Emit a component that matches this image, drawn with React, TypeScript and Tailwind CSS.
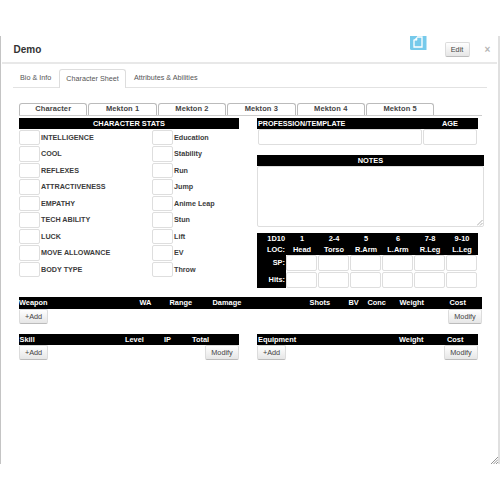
import React from "react";

const stats = [
  ["INTELLIGENCE", "Education"],
  ["COOL", "Stability"],
  ["REFLEXES", "Run"],
  ["ATTRACTIVENESS", "Jump"],
  ["EMPATHY", "Anime Leap"],
  ["TECH ABILITY", "Stun"],
  ["LUCK", "Lift"],
  ["MOVE ALLOWANCE", "EV"],
  ["BODY TYPE", "Throw"],
];

const locations = [
  ["1", "Head"],
  ["2-4", "Torso"],
  ["5", "R.Arm"],
  ["6", "L.Arm"],
  ["7-8", "R.Leg"],
  ["9-10", "L.Leg"],
];

const sheets = ["Character", "Mekton 1", "Mekton 2", "Mekton 3", "Mekton 4", "Mekton 5"];

function Field({ className = "" }: { className?: string }) {
  return <div className={`rounded-[2px] border border-[#dedede] bg-white ${className}`} />;
}

function Button({ children, className = "" }: { children: React.ReactNode; className?: string }) {
  return (
    <button
      className={`flex items-center justify-center rounded-[2px] border border-[#dcdcdc] border-b-[#bcbcbc] bg-linear-to-b from-white to-[#e6e6e6] text-[7.3px] leading-none text-[#444] ${className}`}
    >
      {children}
    </button>
  );
}

function Bar({ children, className = "" }: { children: React.ReactNode; className?: string }) {
  return (
    <div className={`flex h-[11px] items-center bg-black text-[7.4px] leading-none font-bold whitespace-nowrap text-white ${className}`}>
      {children}
    </div>
  );
}

export default function App() {
  return (
    <div className="h-[500px] w-[500px] overflow-hidden bg-white pt-9 font-['Liberation_Sans',Arial,sans-serif] text-[#333]">
      <div className="relative h-[428px] border-r-2 border-l border-r-[#e0e0e0] border-l-[#c4c4c4]">
        <header className="mr-px ml-px flex h-[28px] items-start border-b-2 border-[#e8e8e8] pl-[11.5px]">
          <h1 className="mt-[8px] w-[396px] text-[10px] leading-[12px] font-bold text-[#333]">Demo</h1>
          <svg className="h-[14px] w-[17px] shrink-0" viewBox="0 0 17 14">
            <path d="M0 0H16.5V14H1.5Q0 14 0 12.5Z" fill="#76caeb" />
            <path d="M4 3.5V11H12V1H7" fill="none" stroke="white" strokeWidth="1.3" />
            <path d="M4 4.2 7 1.2V4.2Z" fill="white" stroke="white" strokeWidth=".6" />
          </svg>
          <Button className="mt-[6px] ml-[18px] h-[15px] w-[25px] shrink-0">Edit</Button>
          <span className="mt-[8px] ml-[15px] text-[10px] leading-[12px] font-bold text-[#b5b5b5]">×</span>
        </header>

        <nav className="mr-[11px] ml-[12px] flex h-[24px] items-end border-b border-[#e2e2e2] text-[7.2px] whitespace-nowrap text-[#555]">
          <span className="flex h-[18px] w-[46px] items-center pl-[7px]">Bio &amp; Info</span>
          <span className="-mb-px flex h-[19px] w-[67px] items-center justify-center rounded-t-[3px] border border-b-0 border-[#ddd] bg-white">Character Sheet</span>
          <span className="flex h-[18px] items-center pl-[8px]">Attributes &amp; Abilities</span>
        </nav>

        <main className="mt-[15px] ml-[18px] w-[466px]">
          <div className="flex h-[13px] w-[463px] gap-px border-b border-[#ccc]">
            {sheets.map((sheet) => (
              <div key={sheet} className="flex h-[12px] w-[68.4px] items-center justify-center rounded-t-[3px] border border-b-0 border-[#bbb] pb-px text-[7.5px] leading-none font-bold tracking-[0.1px] text-[#444]">
                {sheet}
              </div>
            ))}
          </div>

          <div className="mt-[2px] flex h-[179px] items-start">
            <section className="w-[220px]">
              <Bar className="justify-center">CHARACTER STATS</Bar>
              <div className="mt-[0.5px]">
                {stats.map(([stat, derived]) => (
                  <div key={stat} className="flex h-[16.5px] items-start text-[7.2px] leading-[15px] font-bold whitespace-nowrap text-[#3c3c3c]">
                    <Field className="mr-px h-[15.5px] w-[21px]" />
                    <span className="w-[111px]">{stat}</span>
                    <Field className="mr-px h-[15.5px] w-[21px]" />
                    <span>{derived}</span>
                  </div>
                ))}
              </div>
            </section>

            <section className="ml-[18px] w-[227px]">
              <Bar className="w-[221px]">
                <span className="w-[185px] pl-px text-[7.2px]">PROFESSION/TEMPLATE</span>
                <span>AGE</span>
              </Bar>
              <div className="flex gap-px">
                <Field className="ml-px h-[16px] w-[164px]" />
                <Field className="h-[16px] w-[54px]" />
              </div>
              <Bar className="mt-[10px] justify-center">NOTES</Bar>
              <div className="flex h-[61px] items-end justify-end rounded-[2px] border border-[#dedede] bg-white">
                <svg className="h-[6px] w-[6px]" viewBox="0 0 6 6" stroke="#999" strokeWidth=".8">
                  <path d="M0 5.5 5.5 0M3 5.5 5.5 3" />
                </svg>
              </div>
              <div className="mt-[6px] grid w-[221px] grid-cols-[29px_repeat(6,32px)] bg-black text-[7.4px] leading-[11px] font-bold text-white">
                <div className="h-[22px] pr-px text-right">
                  <div>1D10</div>
                  <div>LOC:</div>
                </div>
                {locations.map(([roll, part]) => (
                  <div key={part} className="text-center">
                    <div>{roll}</div>
                    <div>{part}</div>
                  </div>
                ))}
                {["SP:", "Hits:"].map((row) => (
                  <React.Fragment key={row}>
                    <div className="pr-px text-right leading-[16px]">{row}</div>
                    {locations.map(([, part]) => (
                      <div key={part} className="h-[16.5px] bg-white">
                        <Field className="h-[16px] w-[31px]" />
                      </div>
                    ))}
                  </React.Fragment>
                ))}
              </div>
            </section>
          </div>

          <section className="w-[463px]">
            <Bar className="h-[12px]">
              <span className="w-[120.5px]">Weapon</span>
              <span className="w-[30px]">WA</span>
              <span className="w-[43px]">Range</span>
              <span className="w-[97px]">Damage</span>
              <span className="w-[39px]">Shots</span>
              <span className="w-[19px]">BV</span>
              <span className="w-[32px]">Conc</span>
              <span className="w-[50px]">Weight</span>
              <span>Cost</span>
            </Bar>
            <div className="flex justify-between">
              <Button className="h-[15px] w-[29px]">+Add</Button>
              <Button className="h-[15px] w-[34px]">Modify</Button>
            </div>
          </section>

          <div className="mt-[10px] flex gap-[18px]">
            <section className="w-[220px]">
              <Bar>
                <span className="w-[106px] pl-[0.5px]">Skill</span>
                <span className="w-[39px]">Level</span>
                <span className="w-[28px]">IP</span>
                <span>Total</span>
              </Bar>
              <div className="flex justify-between">
                <Button className="h-[15px] w-[29px]">+Add</Button>
                <Button className="h-[15px] w-[34px]">Modify</Button>
              </div>
            </section>
            <section className="w-[221px]">
              <Bar>
                <span className="w-[142px] pl-px">Equipment</span>
                <span className="w-[48px]">Weight</span>
                <span>Cost</span>
              </Bar>
              <div className="flex justify-between">
                <Button className="h-[15px] w-[29px]">+Add</Button>
                <Button className="h-[15px] w-[34px]">Modify</Button>
              </div>
            </section>
          </div>
        </main>
        <svg className="absolute right-0 bottom-0 h-[7px] w-[7px]" viewBox="0 0 7 7" stroke="#888" strokeWidth=".9">
          <path d="M0 7 7 0M2.5 7 7 2.5M5 7 7 5" />
        </svg>
      </div>
    </div>
  );
}
